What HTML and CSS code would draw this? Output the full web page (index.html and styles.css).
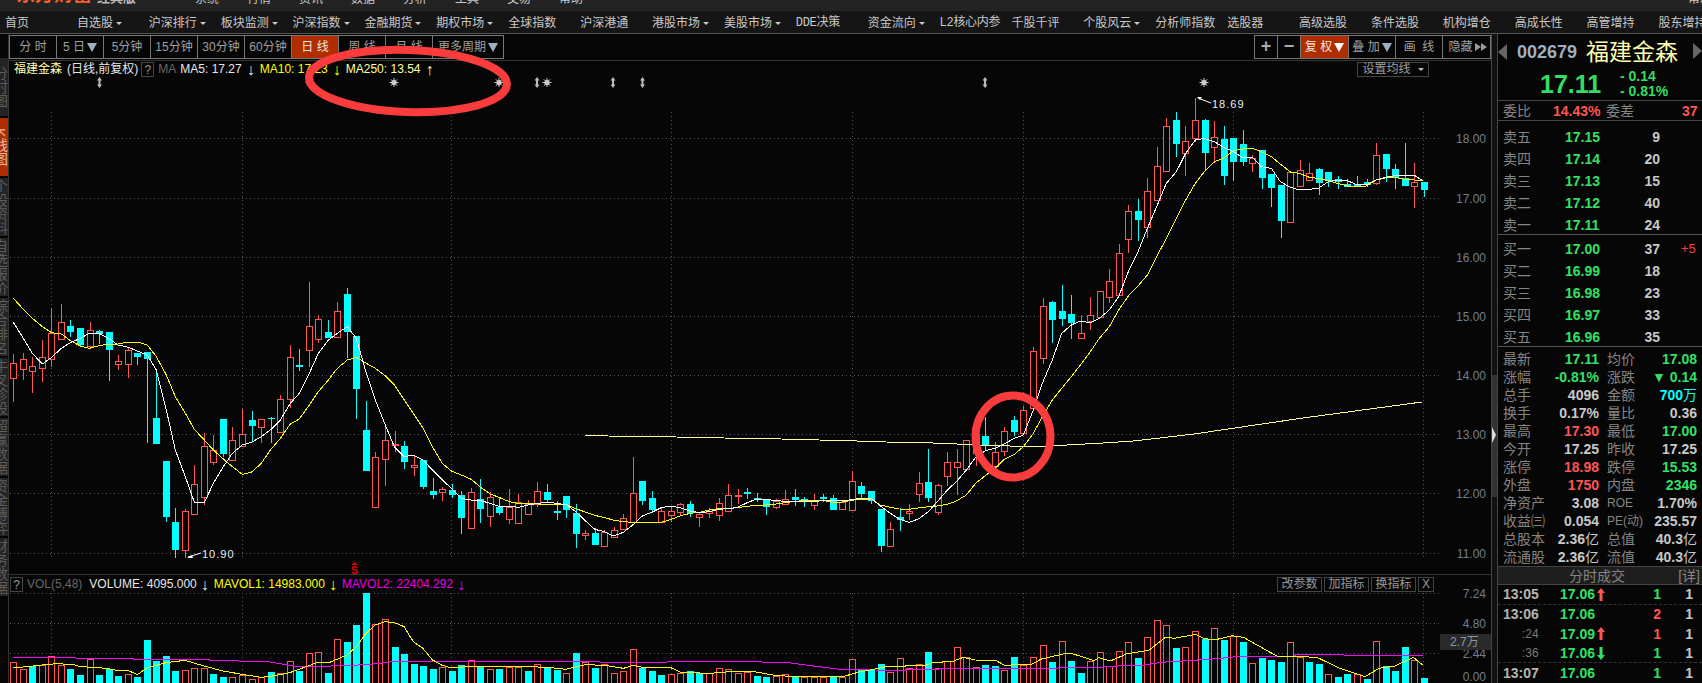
FILE: index.html
```html
<!DOCTYPE html>
<html lang="zh-CN">
<head>
    <meta charset="UTF-8">
    <title>福建金森 002679</title>
    <link rel="stylesheet" href="styles.css">
</head>
<body>
    <div class="titlebar">
        <span class="logo-icon"></span>
        <span class="logo-name">东方财富</span>
        <span class="logo-edition">经典版</span>
        <span class="title-sep"></span>
        <span class="title-menu">
            <span>系统</span><span>行情</span><span>资讯</span><span>数据</span><span>分析</span><span>工具</span><span>交易</span><span>帮助</span>
        </span>
        <span class="title-sep"></span>
        <span class="title-help">帮助</span>
    </div>

    <nav class="nav">
        <span>首页</span>
        <span class="menu">自选股</span>
        <span class="menu">沪深排行</span>
        <span class="menu">板块监测</span>
        <span class="menu">沪深指数</span>
        <span class="menu">金融期货</span>
        <span class="menu">期权市场</span>
        <span>全球指数</span>
        <span>沪深港通</span>
        <span class="menu">港股市场</span>
        <span class="menu">美股市场</span>
        <span class="mono">DDE决策</span>
        <span class="menu">资金流向</span>
        <span class="mono">L2核心内参</span>
        <span>千股千评</span>
        <span class="menu">个股风云</span>
        <span>分析师指数</span>
        <span>选股器</span>
        <span>高级选股</span>
        <span>条件选股</span>
        <span>机构增仓</span>
        <span>高成长性</span>
        <span>高管增持</span>
        <span>股东增持</span>
    </nav>

    <div class="workspace">
        <aside class="side-tabs">
            <div class="side-tab"><span>分时图</span></div>
            <div class="side-tab active"><span>K线图</span></div>
            <div class="side-tab"><span>个股资料</span></div>
            <div class="side-tab"><span>自选报价</span></div>
            <div class="side-tab"><span>综合排名</span></div>
            <div class="side-tab"><span>牛叉诊股</span></div>
            <div class="side-tab"><span>超赢数据</span></div>
            <div class="side-tab"><span>资金博弈</span></div>
            <div class="side-tab"><span>财务数据</span></div>
        </aside>

        <main class="chart-col">
            <div class="toolbar">
                <div class="btn-group">
                    <span class="btn">分&nbsp;时</span>
                    <span class="btn">5 日<i class="tri"></i></span>
                    <span class="btn">5分钟</span>
                    <span class="btn">15分钟</span>
                    <span class="btn">30分钟</span>
                    <span class="btn">60分钟</span>
                    <span class="btn active">日&nbsp;线</span>
                    <span class="btn">周&nbsp;线</span>
                    <span class="btn">月&nbsp;线</span>
                    <span class="btn wide">更多周期<i class="tri"></i></span>
                </div>
                <div class="btn-group">
                    <span class="btn small">+</span>
                    <span class="btn small">−</span>
                    <span class="btn">复&nbsp;权<i class="tri light"></i></span>
                    <span class="btn">叠&nbsp;加<i class="tri"></i></span>
                    <span class="btn">画&nbsp;&nbsp;线</span>
                    <span class="btn">隐藏<i class="tri-right"></i><i class="tri-right"></i></span>
                </div>
            </div>

            <section class="kline-pane">
                <svg id="klineChart" class="chart-svg"></svg>
                <div class="legend">
                    <span class="stock-name">福建金森</span>
                    <span class="period">(日线,前复权)</span>
                    <span class="help-box">?</span>
                    <span class="dim">MA</span>
                    <span class="white ma5">MA5: 17.27</span><span class="white arrow">↓</span>
                    <span class="yellow">MA10: 17.23</span><span class="yellow arrow">↓</span>
                    <span class="pale">MA250: 13.54</span><span class="pale arrow">↑</span>
                </div>
                <span class="ma-setting">设置均线<i class="tri-small"></i></span>
            </section>

            <section class="vol-pane">
                <svg id="volChart" class="chart-svg"></svg>
                <div class="legend">
                    <span class="help-box">?</span>
                    <span class="dim">VOL(5,48)</span>
                    <span class="white vol-value">VOLUME: 4095.000</span><span class="white arrow">↓</span>
                    <span class="yellow">MAVOL1: 14983.000</span><span class="yellow arrow">↓</span>
                    <span class="magenta">MAVOL2: 22404.292</span><span class="magenta arrow">↓</span>
                </div>
                <div class="vol-tools">
                    <span>改参数</span><span>加指标</span><span>换指标</span><span class="close">X</span>
                </div>
            </section>
        </main>

        <div class="scroll-col">
            <div class="scroll-thumb"></div>
            <div class="scroll-mark"></div>
        </div>

        <aside class="quote">
            <div class="quote-head">
                <i class="nav-tri left"></i>
                <span class="code">002679</span>
                <span class="name">福建金森</span>
                <i class="nav-tri right"></i>
            </div>
            <div class="quote-price">
                <span class="last">17.11</span>
                <div class="change">
                    <span>- 0.14</span>
                    <span>- 0.81%</span>
                </div>
            </div>

            <div class="ratio">
                <span class="label">委比</span><span class="red num ratio-pct">14.43%</span>
                <span class="label ratio-diff">委差</span><span class="red num ratio-val">37</span>
            </div>

            <div class="book sell">
                <div class="book-row"><span class="label">卖五</span><b class="green">17.15</b><b class="vol">9</b></div>
                <div class="book-row"><span class="label">卖四</span><b class="green">17.14</b><b class="vol">20</b></div>
                <div class="book-row"><span class="label">卖三</span><b class="green">17.13</b><b class="vol">15</b></div>
                <div class="book-row"><span class="label">卖二</span><b class="green">17.12</b><b class="vol">40</b></div>
                <div class="book-row"><span class="label">卖一</span><b class="green">17.11</b><b class="vol">24</b></div>
            </div>
            <div class="book buy">
                <div class="book-row"><span class="label">买一</span><b class="green">17.00</b><b class="vol">37</b><span class="delta">+5</span></div>
                <div class="book-row"><span class="label">买二</span><b class="green">16.99</b><b class="vol">18</b></div>
                <div class="book-row"><span class="label">买三</span><b class="green">16.98</b><b class="vol">23</b></div>
                <div class="book-row"><span class="label">买四</span><b class="green">16.97</b><b class="vol">33</b></div>
                <div class="book-row"><span class="label">买五</span><b class="green">16.96</b><b class="vol">35</b></div>
            </div>

            <div class="stats">
                <div class="stat"><span class="label">最新</span><b class="green">17.11</b></div>
                <div class="stat"><span class="label">均价</span><b class="green">17.08</b></div>
                <div class="stat"><span class="label">涨幅</span><b class="green">-0.81%</b></div>
                <div class="stat"><span class="label">涨跌</span><b class="green">▼ 0.14</b></div>
                <div class="stat"><span class="label">总手</span><b>4096</b></div>
                <div class="stat"><span class="label">金额</span><b class="cyan">700<span class="unit">万</span></b></div>
                <div class="stat"><span class="label">换手</span><b>0.17%</b></div>
                <div class="stat"><span class="label">量比</span><b>0.36</b></div>
                <div class="stat"><span class="label">最高</span><b class="red">17.30</b></div>
                <div class="stat"><span class="label">最低</span><b class="green">17.00</b></div>
                <div class="stat"><span class="label">今开</span><b>17.25</b></div>
                <div class="stat"><span class="label">昨收</span><b>17.25</b></div>
                <div class="stat"><span class="label">涨停</span><b class="red">18.98</b></div>
                <div class="stat"><span class="label">跌停</span><b class="green">15.53</b></div>
                <div class="stat"><span class="label">外盘</span><b class="red">1750</b></div>
                <div class="stat"><span class="label">内盘</span><b class="green">2346</b></div>
                <div class="stat"><span class="label">净资产</span><b>3.08</b></div>
                <div class="stat"><span class="label latin">ROE</span><b>1.70%</b></div>
                <div class="stat"><span class="label">收益㈢</span><b>0.054</b></div>
                <div class="stat"><span class="label latin">PE(动)</span><b>235.57</b></div>
                <div class="stat"><span class="label">总股本</span><b>2.36<span class="unit">亿</span></b></div>
                <div class="stat"><span class="label">总值</span><b>40.3<span class="unit">亿</span></b></div>
                <div class="stat"><span class="label">流通股</span><b>2.36<span class="unit">亿</span></b></div>
                <div class="stat"><span class="label">流值</span><b>40.3<span class="unit">亿</span></b></div>
            </div>

            <div class="ticks-head"><span>分时成交</span><span class="detail">[详]</span></div>
            <div class="tick-row minute-end">
                <b class="time">13:05</b><b class="green">17.06</b>
                <svg class="tick-arrow up" viewBox="0 0 8 13"><path d="M4 0L8 5H5.5V13H2.5V5H0Z"/></svg>
                <b class="green num-col">1</b><b class="num-col last-col">1</b>
            </div>
            <div class="tick-row">
                <b class="time">13:06</b><b class="green">17.06</b><i></i>
                <b class="red num-col">2</b><b class="num-col last-col">1</b>
            </div>
            <div class="tick-row">
                <span class="time sec">:24</span><b class="green">17.09</b>
                <svg class="tick-arrow up" viewBox="0 0 8 13"><path d="M4 0L8 5H5.5V13H2.5V5H0Z"/></svg>
                <b class="red num-col">1</b><b class="num-col last-col">1</b>
            </div>
            <div class="tick-row minute-end">
                <span class="time sec">:36</span><b class="green">17.06</b>
                <svg class="tick-arrow down" viewBox="0 0 8 13"><path d="M4 13L0 8H2.5V0H5.5V8H8Z"/></svg>
                <b class="green num-col">1</b><b class="num-col last-col">1</b>
            </div>
            <div class="tick-row">
                <b class="time">13:07</b><b class="green">17.06</b><i></i>
                <b class="green num-col">1</b><b class="num-col last-col">1</b>
            </div>
        </aside>
    </div>

    <!-- hand-drawn marks on top of the screenshot -->
    <svg class="marks" viewBox="0 0 1702 683">
        <ellipse cx="408" cy="81" rx="99" ry="31" transform="rotate(2 408 81)"/>
        <ellipse cx="1013" cy="436.5" rx="37.5" ry="41"/>
    </svg>

    <script src="chart.js"></script>
</body>
</html>
```

FILE: styles.css
```css
* { box-sizing: border-box; }
html, body { margin: 0; height: 683px; overflow: hidden; }
body { width: 1702px; background: #060606; color: #c8c8c8; font: 12px/1.2 "Liberation Sans", "Noto Sans CJK SC", sans-serif; position: relative; }
i { font-style: normal; }

.titlebar { height: 11px; background: #232323; display: flex; align-items: flex-start; overflow: hidden; white-space: nowrap; }
.logo-icon { width: 12px; height: 12px; margin: -6px 0 0 12px; border-radius: 50%; background: #f2622a; }
.logo-name { margin: -17px 0 0 4px; font-size: 19px; line-height: 24px; font-weight: bold; color: #f2622a; }
.logo-edition { margin: -11px 0 0 5px; font-size: 13px; line-height: 18px; font-weight: bold; color: #b9b9b9; }
.title-sep { width: 1px; height: 11px; margin-left: 40px; background: #555; }
.title-menu { display: flex; margin: -9px 0 0 19px; font-size: 12px; line-height: 16px; color: #c8c8c8; }
.title-menu span { width: 52px; }
.title-help { margin: -9px 0 0 1037px; line-height: 16px; color: #c8c8c8; }

.nav { height: 23px; padding: 3px 0 0 5px; display: flex; align-items: center; background: #151515; border-bottom: 1px solid #555; white-space: nowrap; overflow: hidden; }
.nav span { flex: none; width: 71.9px; }
.nav .menu::after { content: ""; display: inline-block; margin-left: 3px; vertical-align: 2px; border: 3px solid transparent; border-top: 3px solid #c8c8c8; border-bottom: 0; }
.nav .mono { font-family: "Liberation Mono", "Noto Sans CJK SC", monospace; letter-spacing: -0.3px; }

.workspace { height: 649px; display: flex; }

.side-tabs { flex: none; width: 9px; padding-top: 24px; border-right: 1px solid #333; overflow: hidden; }
.side-tab { height: 58px; margin-bottom: 2px; background: #242424; color: #5e5e5e; overflow: hidden; display: flex; align-items: center; }
.side-tab span { writing-mode: vertical-rl; margin-left: -7px; font-size: 14px; line-height: 14px; white-space: nowrap; }
.side-tab.active { background: #b02d00; color: #e8b8a0; }

.chart-col { flex: none; width: 1482px; display: flex; flex-direction: column; }
.toolbar { flex: none; height: 27px; padding-top: 1px; display: flex; justify-content: space-between; border-bottom: 1px solid #333; }
.btn-group { display: flex; height: 24px; border: 1px solid #777; }
.btn { width: 47px; display: flex; align-items: center; justify-content: center; gap: 2px; color: #a0a0a0; border-right: 1px solid #777; white-space: nowrap; }
.btn:last-child { border-right: 0; }
.btn.active { background: #b02d00; color: #f2e6dc; }
.btn.wide { width: 70px; }
.btn.small { width: 23px; font-size: 18px; font-weight: bold; color: #aaa; }
.toolbar .btn-group:last-child .btn:nth-child(3) { background: #b02d00; color: #f2e6dc; width: 48px; }
.tri { border: 5px solid transparent; border-top: 9px solid #9db0c2; border-bottom: 0; }
.tri.light { border-top-color: #fff; }
.tri-right { margin-right: -2px; border: 4px solid transparent; border-left: 6px solid #9a9a9a; border-right: 0; }

.kline-pane { flex: none; height: 513px; position: relative; }
.vol-pane { flex: none; height: 109px; position: relative; border-top: 1px solid #333; }
.chart-svg { position: absolute; top: 0; left: 0; width: 100%; height: 100%; }

.legend { position: absolute; top: 1px; left: 1px; height: 15px; display: flex; align-items: center; white-space: nowrap; }
.kline-pane .legend { padding-left: 4px; }
.stock-name { color: #ffffb0; }
.period { margin-left: 5px; color: #e6e6e6; }
.help-box { width: 13px; height: 15px; margin-left: 3px; text-align: center; line-height: 14px; color: #999; border: 1px solid #444; }
.vol-pane .help-box { margin-left: 0; }
.dim { margin-left: 4px; color: #666; }
.white { color: #e8e8e8; }
.yellow { color: #ffff00; }
.pale { color: #ffffa0; }
.magenta { color: #e800e8; }
.ma5 { margin-left: 4px; }
.vol-value { margin-left: 7px; }
.arrow { margin: 0 5px; font-size: 16px; line-height: 15px; }
.vol-pane .legend { top: 2px; }
.vol-pane .arrow { margin: 0 5px 0 4px; }

.ma-setting { position: absolute; top: 1px; right: 62px; width: 72px; height: 15px; display: flex; align-items: center; justify-content: center; gap: 7px; color: #a0a0a0; border: 1px solid #444; }
.tri-small { border: 3px solid transparent; border-top: 3px solid #bbb; border-bottom: 0; }

.vol-tools { position: absolute; top: 2px; right: 57px; display: flex; gap: 2px; }
.vol-tools span { width: 45px; height: 15px; text-align: center; line-height: 13px; color: #999; border: 1px solid #444; }
.vol-tools .close { width: 16px; }

.scroll-col { flex: none; width: 6px; position: relative; border-left: 1px solid #444; background: #111; }
.scroll-thumb { margin-top: 341px; height: 122px; background: #333; }
.scroll-mark { position: absolute; top: 393px; left: 0; border: 8px solid transparent; border-left: 4px solid #ddd; border-right: 0; }

.quote { flex: none; width: 205px; border-left: 1px solid #444; font-size: 14px; line-height: 18px; }
.quote b { font-weight: bold; }
.quote-head { height: 34px; display: flex; align-items: center; position: relative; padding-top: 2px; }
.nav-tri.left { margin-left: 0; border: 8px solid transparent; border-right: 9px solid #666; border-left: 0; }
.nav-tri.right { position: absolute; right: 0; top: 9px; border: 8px solid transparent; border-left: 9px solid #666; border-right: 0; }
.code { margin-left: 10px; font-size: 18px; font-weight: bold; color: #9fb0c0; }
.name { margin-left: 9px; font-size: 23px; line-height: 28px; color: #ffffb0; }
.quote-price { height: 33px; display: flex; align-items: center; padding-left: 42px; border-bottom: 1px solid #444; }
.last { width: 80px; font-size: 25px; font-weight: bold; color: #33dd66; }
.change { display: flex; flex-direction: column; font-weight: bold; line-height: 15px; color: #33dd66; }

.label { color: #858585; }
.green { color: #33e066; }
.red { color: #ff5555; }
.cyan { color: #00ffff; }
.num { font-weight: bold; }
.unit { font-weight: normal; }

.ratio { height: 20px; padding-left: 5px; display: flex; align-items: center; border-bottom: 1px solid #444; }
.ratio-pct { margin-left: 22px; width: 48px; }
.ratio-diff { margin-left: 5px; }
.ratio-val { margin-left: 48px; }

.book { padding-left: 5px; border-bottom: 1px solid #555; }
.book.sell { height: 114px; padding-top: 5px; }
.book.buy { height: 112px; padding-top: 3px; }
.book-row { height: 22px; display: flex; align-items: center; position: relative; }
.book-row .label { width: 62px; }
.book-row b { color: #c8c8c8; }
.book-row b.green { width: 50px; color: #33e066; }
.book-row .vol { width: 45px; text-align: right; }
.delta { margin-left: 21px; font-size: 13px; color: #ff3c3c; }

.stats { height: 219px; padding: 3px 0 0 5px; display: grid; grid-template-columns: 96px 90px; grid-auto-rows: 18px; column-gap: 8px; }
.stat { display: flex; justify-content: space-between; align-items: center; white-space: nowrap; }
.stat b { color: #c8c8c8; }
.stat b.green { color: #33e066; }
.stat b.red { color: #ff5555; }
.stat b.cyan { color: #00ffff; }
.label.latin { font-size: 12px; }

.ticks-head { height: 19px; position: relative; display: flex; align-items: center; justify-content: center; background: #1e1e1e; color: #858585; border-top: 1px solid #444; border-bottom: 1px solid #444; padding-right: 6px; }
.detail { position: absolute; right: 2px; }
.tick-row { height: 19.6px; padding-left: 5px; display: grid; grid-template-columns: 57px 37px 12px 52px 32px; align-items: center; }
.minute-end { border-bottom: 1px dashed #333; }
.tick-row b { color: #c8c8c8; }
.tick-row b.green { color: #33e066; }
.tick-row b.red { color: #ff5555; }
.time { color: #aaa; }
.tick-row b.time { color: #b4b4b4; }
.sec { padding-left: 19px; font-size: 12px; color: #777; }
.num-col { text-align: right; }
.tick-arrow { width: 8px; height: 13px; }
.tick-arrow.up { fill: #ff5555; }
.tick-arrow.down { fill: #33e066; }

.marks { position: absolute; top: 0; left: 0; width: 1702px; height: 683px; pointer-events: none; }
.marks ellipse { fill: none; stroke: #fa3c3c; stroke-width: 8; }
```

FILE: chart.js
```js
// Colours of the chart
const RED = '#ff5555';
const CYAN = '#00ffff';

// Candle slots. All y values below were read off the chart at 3x, oy is the y of the crop.
const candleX = i => Math.round(13.3 + 9.53 * i);

// [type, body top, body bottom, high, low]
const candleSets = [
    { oy: 270, rows: [
        ['r',280,325,252,395],['r',268,298,250,330],['r',287,304,262,368],['r',262,295,210,335],
        ['r',190,268,114,290],['r',157,208,102,208],['c',168,185,150,200],['c',174,225,174,230],
        ['r',181,227,157,227],['c',184,192,180,222],['c',186,239,186,332],['r',272,281,255,300],
        ['r',241,283,235,323],['c',249,261,249,285],['c',247,266,247,518],['c',444,522,298,522],
        ['c',573,740,573,755],['c',756,839,714,863],['r',724,841,718,863],['r',643,731,586,731],
        ['r',529,680,490,705],['r',541,577,495,585],['c',447,552,447,560],['r',511,571,472,571],
        ['r',493,527,418,527],['c',450,467,424,515],['r',448,470,448,518],['c',444,448,440,520],
        ['r',388,485,376,488],['r',262,388,225,415],['c',286,290,237,302],['r',169,241,36,290],
        ['r',148,208,135,218],['c',186,204,150,204],['r',124,200,96,200],['c',72,185,54,264],
        ['c',198,356,198,447],['c',480,603,393,603],['r',562,710,546,710],['r',511,566,472,648],
        ['r',522,526,484,546],['c',528,576,513,597],['r',586,590,558,618],['c',570,651,570,656],
        ['c',663,675,624,687],['r',658,667,651,693],['c',660,675,642,684],['c',675,744,663,792],
        ['r',667,773,655,773]
    ] },
    { oy: 430, rows: [
        ['c',207,237,147,279],['r',202,257,185,291],['c',232,249,202,255],['r',232,266,178,281],
        ['r',217,278,191,278],['r',222,251,210,255],['r',184,222,156,230],['c',186,210,162,218],
        ['c',244,248,214,270],['c',198,240,198,264],['c',249,312,222,354],['r',310,314,300,330],
        ['c',309,345,294,345],['r',305,347,300,347],['r',301,320,292,320],['r',265,298,252,298],
        ['r',190,276,82,276],['c',153,213,153,225],['c',204,240,183,248],['r',243,275,235,275],
        ['r',244,254,227,277],['r',223,245,220,255],['c',222,249,214,260],['r',252,260,250,290],
        ['r',244,248,235,263],['r',220,254,205,272],['r',196,242,162,242],['r',195,198,178,222],
        ['c',186,191,174,207],['c',205,208,190,215],['c',208,232,208,255],['r',214,232,208,238],
        ['r',206,223,181,225],['c',201,211,177,228],['c',207,211,200,230],['r',211,224,191,240],
        ['c',202,206,192,215],['c',205,239,195,239],['r',216,236,210,236],['r',154,239,122,239]
    ] },
    { oy: 370, rows: [
        ['c',349,371,336,390],['c',363,392,363,402],['c',417,527,417,545],['r',478,529,457,529],
        ['c',441,449,415,483],['r',422,430,402,450],['r',340,373,307,395],['c',336,383,238,395],
        ['r',346,425,342,435],['r',277,317,246,347],['r',277,292,237,375],['r',211,298,211,298],
        ['r',193,250,193,287],['c',198,227,141,240],['r',247,287,215,287],['r',184,242,171,257],
        ['c',151,185,138,197],['r',121,188,108,188]
    ] },
    { oy: 260, rows: [
        ['r',274,444,262,444],['r',137,295,114,312],['c',126,180,122,248],['c',153,177,75,197],
        ['c',162,189,105,237],['r',220,233,165,237],['r',166,182,111,209]
    ] },
    { oy: 90, rows: [
        ['r',603,680,603,680],['r',574,620,537,640],['r',490,616,462,616],['r',364,446,345,490],
        ['c',364,390,327,452],['r',304,410,265,445],['r',229,329,171,329],['r',109,242,84,245],
        ['c',91,161,66,200],['r',154,188,108,258],['r',91,143,24,157],['c',91,188,88,244],
        ['r',142,170,94,218],['c',147,258,108,285],['c',144,215,144,274],['c',162,216,120,228],
        ['r',203,220,196,246],['c',180,264,180,297],['c',252,294,252,351],['c',285,393,285,444],
        ['r',247,395,247,398],['r',241,287,210,287],['r',250,269,219,274],['c',237,278,234,315],
        ['c',246,272,246,291],['c',268,275,258,297],['c',282,290,268,290],['c',283,287,258,290],
        ['c',277,286,268,290],['r',196,280,159,286],['c',192,237,192,276],['c',237,263,222,297],
        ['c',263,288,159,288],['r',277,287,219,354],['c',276,300,276,321]
    ] }
];

// The price lines, one piece per crop: [x, y] in the crop, ox/oy its origin, all at 3x
const ma5Parts = [
    { ox: 0, oy: 270, pts: [[40,157],[70,205],[97,250],[127,282],[155,262],[184,235],[211,218],[241,205],[268,190],[298,190],[328,207],[355,225],[385,232],[412,243],[442,255],[469,300],[499,420],[526,540],[556,620],[583,697],[613,698],[640,640],[670,590],[697,550],[727,525],[754,517],[784,500],[811,480],[841,450],[871,400],[898,370],[928,310],[955,250],[985,210],[1012,190],[1042,170],[1069,205],[1099,310],[1126,390],[1156,465],[1183,530],[1213,560],[1240,555],[1270,570],[1297,600],[1327,630],[1354,655],[1384,685],[1414,690]] },
    { ox: 440, oy: 430, pts: [[122,212],[151,220],[179,230],[208,228],[236,232],[265,225],[293,220],[322,217],[350,220],[380,225],[407,245],[436,272],[464,298],[493,305],[520,318],[550,307],[578,285],[607,258],[637,246],[664,233],[694,228],[722,234],[751,243],[778,248],[808,245],[835,238],[865,236],[892,232],[922,218],[950,207],[979,209],[1007,211],[1036,215],[1063,215],[1093,216],[1122,215],[1151,211],[1180,212],[1207,213]] },
    { ox: 860, oy: 370, pts: [[0,385],[34,385],[61,408],[91,430],[118,447],[147,457],[175,447],[205,425],[232,395],[262,360],[289,335],[319,300],[347,262],[376,242],[405,235],[433,222],[463,205],[490,195]] },
    { ox: 1025, oy: 260, pts: [[5,500],[25,450],[52,370],[82,300],[110,220],[139,195],[166,183],[196,188],[223,175]] },
    { ox: 1100, oy: 90, pts: [[28,660],[56,620],[85,545],[112,490],[142,415],[170,350],[199,280],[229,245],[257,190],[286,150],[313,145],[343,155],[371,172],[400,185],[428,203],[457,202],[484,230],[514,235],[541,275],[571,292],[598,300],[628,298],[655,295],[685,275],[712,270],[742,272],[771,284],[799,284],[829,270],[856,262],[886,257],[913,256],[943,256],[970,273]] }
];

const ma10Parts = [
    { ox: 0, oy: 270, pts: [[40,85],[70,118],[97,145],[127,170],[155,188],[184,192],[211,212],[241,228],[268,235],[298,227],[328,222],[355,222],[385,216],[412,216],[442,225],[469,260],[499,315],[526,380],[556,430],[583,478],[613,510],[640,540],[670,567],[697,590],[727,613],[754,607],[784,580],[811,540],[841,505],[871,462],[898,447],[928,405],[955,365],[985,330],[1012,295],[1042,270],[1069,262],[1099,280],[1126,295],[1156,318],[1183,345],[1213,390],[1240,430],[1270,475],[1297,530],[1327,580],[1354,603],[1384,615],[1414,628]] },
    { ox: 440, oy: 430, pts: [[122,172],[151,192],[179,203],[208,215],[236,221],[265,221],[293,222],[322,222],[350,222],[380,224],[407,236],[436,246],[464,256],[493,263],[520,270],[550,275],[578,277],[607,277],[637,277],[664,277],[694,268],[722,257],[751,250],[778,247],[808,240],[835,236],[865,236],[892,233],[922,229],[950,226],[979,225],[1007,222],[1036,218],[1063,214],[1093,212],[1122,212],[1151,212],[1180,217],[1207,216]] },
    { ox: 860, oy: 370, pts: [[0,387],[34,387],[61,405],[91,412],[118,417],[147,418],[175,414],[205,410],[232,408],[262,403],[289,393],[319,375],[347,340],[376,317],[405,295],[433,268],[463,253],[490,230],[520,190]] },
    { ox: 1025, oy: 260, pts: [[52,470],[82,420],[110,385],[139,350],[166,315],[196,275],[223,235]] },
    { ox: 1100, oy: 90, pts: [[28,710],[56,660],[85,618],[112,590],[142,555],[170,500],[199,445],[229,385],[257,330],[286,280],[313,245],[343,215],[371,205],[400,182],[428,177],[457,175],[484,185],[514,200],[541,222],[571,246],[598,250],[628,262],[655,265],[685,272],[712,280],[742,288],[771,288],[799,288],[829,270],[856,264],[886,262],[913,268],[943,270],[970,272]] }
];

const ma250 = [[585,435],[608,436],[676,437],[724,438],[781,439],[819,440],[857,441],[886,442],[933,443],[980,445],[1010,446],[1047,446],[1067,445],[1103,443],[1133,441],[1160,438],[1194,434],[1303,418],[1422,402]];

// Volume bars, one entry per candle: [type, top of bar at 3x, crop y is 560]
const volBars = [
    ['r',307],['r',328],['c',317],['r',314],['r',288],['r',316],['c',327],['c',345],['r',298],['c',345],
    ['c',328],['c',348],['r',343],['c',352],['c',240],['c',303],['c',288],['c',333],['r',331],['r',324],
    ['r',323],['c',343],['c',351],['r',351],['r',345],['r',358],['r',352],['c',336],['r',338],['r',304],
    ['c',334],['r',280],['r',277],['c',339],['r',238],['c',246],['c',195],['c',100],['r',192],['r',178],
    ['c',261],['c',282],['c',312],['c',318],['c',327],['r',322],['c',333],['c',315],['r',300],['c',320],
    ['r',327],['c',327],['r',320],['r',322],['c',333],['r',313],['c',322],['c',330],['r',340],['c',280],
    ['r',305],['c',324],['r',313],['r',340],['r',333],['r',268],['c',324],['c',333],['c',345],['r',342],
    ['r',340],['c',333],['c',340],['r',340],['r',324],['r',328],['r',340],['r',337],['c',348],['c',351],
    ['r',348],['r',343],['c',350],['r',350],['r',350],['r',350],['c',350],['r',352],['r',297],['c',330],
    ['c',330],['c',312],['r',335],['r',295],['r',325],['r',312],['c',276],['r',325],['r',304],['r',262],
    ['r',292],['r',322],['c',315],['c',318],['r',330],['c',291],['r',315],['r',292],['r',256],['c',306],
    ['r',244],['c',303],['c',339],['r',304],['r',277],['r',317],['r',274],['r',247],['c',294],['r',232],
    ['r',181],['r',195],['c',264],['r',261],['r',213],['c',236],['r',205],['c',240],['r',228],['c',246],
    ['r',310],['c',294],['c',300],['c',306],['r',247],['r',290],['c',306],['c',312],['r',343],['c',351],
    ['c',342],['r',343],['c',357],['r',244],['c',318],['c',333],['c',261],['r',300],['c',354]
];

// x is scaled by 1568/720 in these two crops
const mavol1Parts = [
    { ox: 0, pts: [[29,323],[60,320],[91,315],[125,311],[160,314],[175,320],[215,323],[240,327],[260,333],[280,332],[299,344],[320,324],[361,308],[403,301],[444,318],[486,333],[527,343],[569,352],[590,349],[631,338],[673,317],[694,306],[720,306],[756,285],[776,260],[797,220],[817,195],[839,185],[859,188],[880,200],[900,245],[921,265],[942,300],[963,316],[984,324],[1025,319],[1046,319],[1150,320],[1192,322],[1233,328],[1254,320],[1275,314],[1316,316],[1358,325],[1378,316],[1399,322],[1461,323],[1482,337],[1544,340]] },
    { ox: 720, pts: [[0,338],[25,334],[70,334],[115,345],[150,349],[270,349],[300,337],[345,325],[365,319],[445,317],[465,307],[505,305],[530,292],[555,300],[600,301],[620,316],[680,312],[700,297],[750,281],[765,280],[815,302],[825,293],[850,303],[885,282],[935,270],[970,232],[990,235],[1035,223],[1055,236],[1080,239],[1115,227],[1140,232],[1180,263],[1215,290],[1250,289],[1300,292],[1350,325],[1405,350],[1435,325],[1470,318],[1510,292],[1530,315]] }
];
const mavol2Parts = [
    { ox: 0, pts: [[29,293],[165,293],[168,296],[290,296],[293,299],[455,299],[458,302],[580,304],[640,318],[720,318],[800,314],[850,306],[1000,304],[1240,304],[1340,307],[1440,307],[1480,304]] },
    { ox: 720, pts: [[0,304],[90,304],[92,307],[150,308],[175,313],[215,320],[260,328],[380,331],[525,325],[735,325],[740,322],[835,322],[840,319],[920,316],[960,307],[1030,301],[1090,295],[1130,289],[1250,289],[1255,283],[1355,283],[1360,286],[1530,286]] }
];

function polyline(points, color) {
    return `<polyline points="${points.map(p => p.join(',')).join(' ')}" fill="none" stroke="${color}" stroke-width="1" shape-rendering="crispEdges"/>`;
}

function vLine(x, y1, y2, color) {
    return `<line x1="${x + .5}" x2="${x + .5}" y1="${y1}" y2="${y2}" stroke="${color}"/>`;
}

function drawCandle(x, type, top, bot, hi, lo) {
    if (type === 'c') {
        return vLine(x, hi, lo, CYAN) + `<rect x="${x - 3}" y="${top}" width="7" height="${bot - top}" fill="${CYAN}"/>`;
    }
    return vLine(x, hi, top, RED) + vLine(x, bot, lo, RED) +
        `<rect x="${x - 2.5}" y="${top + .5}" width="6" height="${Math.max(bot - top, 1)}" fill="#060606" stroke="${RED}"/>`;
}

function drawGrid(ys, xs, y1, y2, x2) {
    let out = '';
    ys.forEach(y => {
        out += `<line x1="10" x2="${x2}" y1="${y + .5}" y2="${y + .5}" class="grid"/>`;
    });
    xs.forEach(x => {
        out += `<line x1="${x + .5}" x2="${x + .5}" y1="${y1}" y2="${y2}" class="grid"/>`;
    });
    return out;
}

function axisLabel(y, text) {
    return `<text x="1486" y="${y + 4}" text-anchor="end" fill="#6f7f90" font-size="12">${text}</text>`;
}

function star(x, y) {
    let rays = '';
    for (let a = 0; a < 8; a++) {
        const t = a * Math.PI / 4;
        rays += `<line x1="${x}" y1="${y}" x2="${x + 4.5 * Math.cos(t)}" y2="${y + 4.5 * Math.sin(t)}" stroke="#ccc"/>`;
    }
    return rays + `<circle cx="${x}" cy="${y}" r="2.6" fill="#ccc"/>`;
}

function updown(x, y) {
    return `<path fill="#bbb" d="M${x - 2.5} ${y - 2}L${x} ${y - 5.5}L${x + 2.5} ${y - 2}ZM${x - 2.5} ${y + 2}L${x} ${y + 5.5}L${x + 2.5} ${y + 2}ZM${x - 1} ${y - 2}h2v4h-2Z"/>`;
}

function pricePoints(parts) {
    return parts.flatMap(p => p.pts.map(([x, y]) => [p.ox + x / 3, p.oy + y / 3]));
}

function volPoints(parts) {
    return parts.flatMap(p => p.pts.map(([x, y]) => [p.ox + x / (1568 / 720), 560 + y / 3]));
}

function drawKline() {
    const svg = document.getElementById('klineChart');
    svg.setAttribute('viewBox', '9 61 1482 513');
    const gridY = [138, 198, 257, 316, 375, 434, 493, 553];
    const gridX = [51, 242, 451, 671, 852, 1023, 1233, 1423];
    let out = drawGrid(gridY, gridX, 112, 557, 1440);

    let i = 0;
    candleSets.forEach(set => {
        set.rows.forEach(([type, t, b, h, l]) => {
            const y = v => Math.round(set.oy + v / 3);
            out += drawCandle(candleX(i), type, y(t), y(b), y(h), y(l));
            i++;
        });
    });

    out += polyline(ma250, '#ffff99');
    out += polyline(pricePoints(ma10Parts), '#ffff00');
    out += polyline(pricePoints(ma5Parts), '#ffffff');

    [['18.00',139],['17.00',199],['16.00',258],['15.00',317],['14.00',376],['13.00',435],['12.00',494],['11.00',554]].forEach(([t, y]) => {
        out += axisLabel(y, t);
    });

    [99.5,537,613,642.5,985].forEach(x => { out += updown(x, 82.5); });
    [310,394,499,547,1204].forEach(x => { out += star(x, 82.5); });

    // highest and lowest marks
    out += `<path d="M1211 103L1198 98" stroke="#fff"/><path d="M1197 97l5 0l-2 3Z" fill="#fff"/>`;
    out += `<text x="1212" y="108" class="peak">18.69</text>`;
    out += `<path d="M201 553L188 557" stroke="#fff"/><path d="M187 558l5-3l1 3Z" fill="#fff"/>`;
    out += `<text x="202" y="558" class="peak">10.90</text>`;

    // sell signal under the candles
    out += `<path d="M354.5 562l3 3h-6Z" fill="#e00000"/>`;
    out += `<text x="354.5" y="574" text-anchor="middle" fill="#e00000" font-size="11" font-weight="bold">S</text>`;

    svg.innerHTML = `<style>.grid{stroke:#555;stroke-dasharray:1 3}.peak{fill:#eee;font-size:11px;letter-spacing:1px}</style>` + out;
}

function drawVolume() {
    const svg = document.getElementById('volChart');
    svg.setAttribute('viewBox', '9 575 1482 108');
    const gridX = [51, 242, 451, 671, 852, 1023, 1233, 1423];
    let out = drawGrid([593, 623, 653], gridX, 593, 683, 1440);

    volBars.forEach(([type, top], i) => {
        const x = candleX(i);
        const y = Math.round(560 + top / 3);
        if (type === 'c') {
            out += `<rect x="${x - 3}" y="${y}" width="7" height="${684 - y}" fill="${CYAN}"/>`;
        } else {
            out += `<rect x="${x - 2.5}" y="${y + .5}" width="6" height="${684 - y}" fill="#060606" stroke="${RED}"/>`;
        }
    });

    out += polyline(volPoints(mavol2Parts), '#ff00ff');
    out += polyline(volPoints(mavol1Parts), '#ffff00');

    out += axisLabel(594, '7.24') + axisLabel(624, '4.80') + axisLabel(654, '2.44') + axisLabel(677, '0.00');
    out += `<rect x="1440" y="634" width="51" height="16" fill="#2a2a2a"/>`;
    out += `<text x="1450" y="646" fill="#8a97a5" font-size="12">2.7万</text>`;

    svg.innerHTML = `<style>.grid{stroke:#555;stroke-dasharray:1 3}</style>` + out;
}

drawKline();
drawVolume();
```
